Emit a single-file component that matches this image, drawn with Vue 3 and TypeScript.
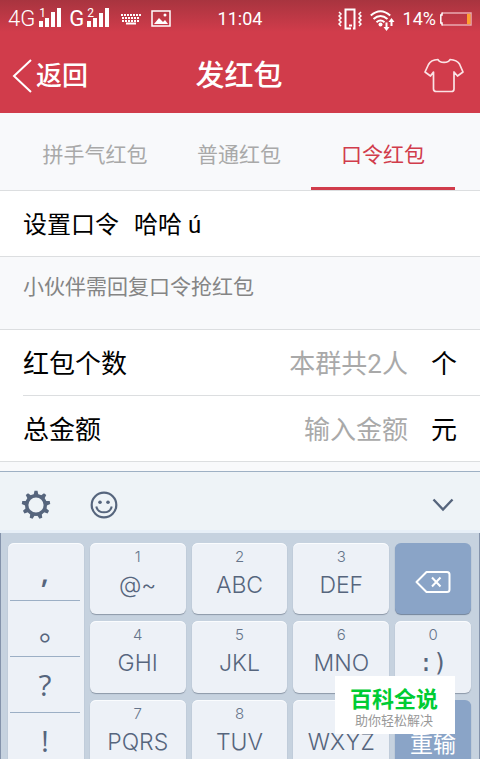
<script setup lang="ts">
import { ref } from 'vue'

interface Tab {
  id: string
  label: string
}

interface Key {
  digit: string
  label: string
}

const tabs: Tab[] = [
  { id: 'lucky', label: '拼手气红包' },
  { id: 'normal', label: '普通红包' },
  { id: 'password', label: '口令红包' },
]
const activeTab = ref('password')

const password = ref('哈哈 ú')
const count = ref('')
const amount = ref('')

const punctuation: string[] = [',', '。', '?', '!']

const rows: Key[][] = [
  [
    { digit: '1', label: '@~' },
    { digit: '2', label: 'ABC' },
    { digit: '3', label: 'DEF' },
  ],
  [
    { digit: '4', label: 'GHI' },
    { digit: '5', label: 'JKL' },
    { digit: '6', label: 'MNO' },
    { digit: '0', label: ':)' },
  ],
  [
    { digit: '7', label: 'PQRS' },
    { digit: '8', label: 'TUV' },
    { digit: '9', label: 'WXYZ' },
  ],
]

const gearTeeth: number[] = Array.from({ length: 9 }, (_, i) => i * 40)
</script>

<template>
  <div class="screen">
    <header class="header">
      <div class="status">
        <div class="status-left">
          <span class="net thin">4G</span>
          <span class="signal">
            <span class="sim">1</span>
            <svg width="22" height="20" viewBox="0 0 22 20" fill="#fff">
              <path d="M0 13h4v6H0zM6 10h4v9H6zM12 4h4v15h-4zM18 0h4v19h-4z" />
            </svg>
          </span>
          <span class="net second">G</span>
          <span class="signal tight">
            <span class="sim">2</span>
            <svg width="22" height="20" viewBox="0 0 22 20" fill="#fff">
              <path d="M0 13h4v6H0zM6 10h4v9H6zM12 5h4v14h-4zM18 0h4v19h-4z" />
            </svg>
          </span>
          <svg class="kbd" width="20" height="12" viewBox="0 0 20 12" fill="none" stroke="#fff" stroke-width="2">
            <path d="M0 2h20M1 5h18M1 8h18" stroke-dasharray="2 1" />
            <path d="M5 10.5h10" />
          </svg>
          <svg width="20" height="18" viewBox="0 0 20 18">
            <rect x="1" y="1" width="18" height="15" fill="none" stroke="#fff" stroke-width="1.5" />
            <path d="M3 14l5-6 4 4 2-2 3 4z" fill="#fff" />
            <circle cx="14" cy="5" r="1.5" fill="#fff" />
          </svg>
        </div>
        <span class="clock">11:04</span>
        <div class="status-right">
          <svg width="24" height="22" viewBox="0 0 24 22" fill="none" stroke="#fff">
            <path d="M13 20.500H7.500V1.500h9v19H15" stroke-width="2" />
            <path d="M11 17.500h3" stroke-width="2" />
            <path d="M1 4l2 2-2 2 2 2-2 2 2 2-2 2 2 2M23 4l-2 2 2 2-2 2 2 2-2 2 2 2-2 2" stroke-width="1.5" />
          </svg>
          <svg class="wifi" width="25" height="22" viewBox="0 0 25 22" fill="none" stroke="#fff">
            <path d="M.8 5.500q9.700-8.500 19.400 0M3.500 9q7-6 14 0M6.500 12.200q4-3.500 8 0" stroke-width="2" />
            <circle cx="10.500" cy="14.500" r="2" fill="#fff" stroke="none" />
            <path d="M16.500 12.500v6M21.500 16v-6" stroke-width="2" />
            <path d="M13.500 17h6l-3 4zM18.500 12h6l-3-4z" fill="#fff" stroke="none" />
          </svg>
          <span class="battery">
            <span class="percent">14%</span>
            <svg width="32" height="14" viewBox="0 0 32 14">
              <path d="M2 1h29v12H2" fill="none" stroke="#e9a9b0" stroke-width="1.500" />
              <path d="M2 .5v2.500H.8v8H2v2.500" fill="none" stroke="#fff" stroke-width="1.500" />
              <rect x="27" y="1.800" width="3.500" height="10.400" fill="#ffa02e" />
            </svg>
          </span>
        </div>
      </div>
      <nav class="nav">
        <a class="back" href="#">
          <svg width="20" height="34" viewBox="0 0 20 34" fill="none" stroke="#fff" stroke-width="2">
            <path d="M19 1L2 17l17 16" />
          </svg>
          返回
        </a>
        <h1 class="title">发红包</h1>
        <button class="shirt" type="button" aria-label="装扮">
          <svg width="40" height="35" viewBox="0 0 40 35" fill="none" stroke="#fbe3e5" stroke-width="1.700" stroke-linejoin="round">
            <path d="M14 1.500c1.500 3.800 10.500 3.800 12 0 4 .2 8 2 9.500 4.500L39 14l-5.500 4-3.500-4v17q0 2.500-2.500 2.500h-15Q9.500 33.500 9.500 31V14L6.500 18 1 14l3.500-7.500C6 3.500 10 1.700 14 1.500z" />
          </svg>
        </button>
      </nav>
    </header>

    <main class="content">
      <div class="tabs" role="tablist">
        <button
          v-for="tab in tabs"
          :key="tab.id"
          type="button"
          role="tab"
          class="tab"
          :class="{ active: tab.id === activeTab }"
          :aria-selected="tab.id === activeTab"
          @click="activeTab = tab.id"
        >
          {{ tab.label }}
        </button>
      </div>

      <div class="group">
        <div class="row password">
          <label for="password">设置口令</label>
          <input id="password" v-model="password" type="text" />
        </div>
      </div>

      <p class="hint">小伙伴需回复口令抢红包</p>

      <div class="group amounts">
        <div class="row">
          <label for="count">红包个数</label>
          <input id="count" v-model="count" type="text" placeholder="本群共2人" />
          <span class="unit">个</span>
        </div>
        <div class="row divided">
          <label for="amount">总金额</label>
          <input id="amount" v-model="amount" type="text" placeholder="输入金额" />
          <span class="unit">元</span>
        </div>
      </div>
    </main>

    <section class="ime">
      <div class="toolbar">
        <button type="button" aria-label="设置">
          <svg width="30" height="30" viewBox="-15 -15 30 30" fill="none" stroke="#56657d">
            <circle r="9.300" stroke-width="3.400" />
            <path
              v-for="angle in gearTeeth"
              :key="angle"
              d="M-2.400-10L-1.500-14.200h3L2.400-10z"
              :transform="`rotate(${angle})`"
              class="tooth"
            />
          </svg>
        </button>
        <button type="button" aria-label="表情">
          <svg width="28" height="28" viewBox="0 0 28 28" fill="none" stroke="#56657d" stroke-width="2.200">
            <circle cx="14" cy="14" r="12.300" />
            <path d="M6.300 15.500c1.500 7.800 13.900 7.800 15.400 0" stroke-width="2" />
            <circle cx="10" cy="11.300" r="1.800" fill="#56657d" stroke="none" />
            <circle cx="18" cy="11.300" r="1.800" fill="#56657d" stroke="none" />
          </svg>
        </button>
        <button class="collapse" type="button" aria-label="收起键盘">
          <svg width="22" height="14" viewBox="0 0 22 14" fill="none" stroke="#56657d" stroke-width="2.400">
            <path d="M1.500 1.500L11 11.500l9.500-10" />
          </svg>
        </button>
      </div>

      <div class="keys">
        <div class="punct">
          <button
            v-for="mark in punctuation"
            :key="mark"
            type="button"
            :class="{ wide: mark === '。', comma: mark === ',' }"
          >{{ mark }}</button>
        </div>
        <template v-for="(row, index) in rows" :key="index">
          <button v-for="key in row" :key="key.digit" class="key" type="button">
            <span class="digit">{{ key.digit }}</span>
            <span class="letters" :class="{ symbol: key.label === ':)' }">{{ key.label }}</span>
          </button>
          <button v-if="index === 0" class="key blue" type="button" aria-label="删除">
            <svg width="36" height="22" viewBox="0 0 36 22" fill="none" stroke="#fff" stroke-width="2">
              <path d="M11.500 1H32q2.500 0 2.500 2.500v15Q34.500 21 32 21H11.500L1.500 11z" stroke-linejoin="round" />
              <path d="M17 6.500l8.500 9M25.500 6.500l-8.500 9" />
            </svg>
          </button>
          <button v-if="index === 2" class="key blue reset" type="button">重输</button>
        </template>
      </div>
    </section>

    <aside class="watermark">
      <strong>百科全说</strong>
      <span>助你轻松解决</span>
    </aside>
  </div>
</template>

<style>
body {
  margin: 0;
}
</style>

<style scoped>
.screen {
  position: relative;
  display: flex;
  flex-direction: column;
  height: 100vh;
  overflow: hidden;
  background: #f8f9fb;
  color: #000;
  font-family: Roboto, "Noto Sans CJK SC", sans-serif;
}

.screen * {
  box-sizing: border-box;
}

button,
input {
  margin: 0;
  padding: 0;
  border: 0;
  background: none;
  color: inherit;
  font: inherit;
}

svg {
  display: block;
  flex: none;
}

.header {
  flex: none;
  background: linear-gradient(#a8343f, #d13c4b 32px);
  color: #fff;
}

.status {
  display: flex;
  align-items: center;
  height: 38px;
  padding: 0 8px;
}

.status-left,
.status-right {
  display: flex;
  flex: 1;
  align-items: center;
}

.status-right {
  justify-content: flex-end;
  gap: 8px;
}

.battery {
  display: flex;
  align-items: center;
  gap: 4px;
}

.net {
  font-size: 22px;
  line-height: 24px;
}

.thin {
  font-weight: 300;
}

.second {
  margin-left: 8px;
}

.signal {
  display: grid;
  margin: 0 0 2px 4px;
}

.tight {
  margin-left: 3px;
}

.signal > * {
  grid-area: 1 / 1;
}

.sim {
  font-size: 12px;
  line-height: 11px;
}

.kbd {
  margin: 0 10px 0 12px;
}

.clock,
.percent {
  font-size: 18px;
  line-height: 24px;
}

.wifi {
  margin-top: 3px;
}

.nav {
  display: grid;
  grid-template-columns: 1fr auto 1fr;
  align-items: center;
  height: 75px;
  padding: 0 14px 0 12px;
}

.back {
  display: flex;
  align-items: center;
  gap: 4px;
  color: #fff;
  font-size: 26px;
  font-weight: 500;
  line-height: 34px;
  text-decoration: none;
}

.title {
  margin: 0;
  font-size: 29px;
  font-weight: 500;
  line-height: 36px;
}

.shirt {
  justify-self: end;
  padding-right: 2px;
}

.content {
  flex: none;
}

.tabs {
  display: grid;
  grid-template-columns: repeat(3, 1fr);
  height: 78px;
  padding: 0 25px 0 23px;
  border-bottom: 1px solid #dcdee0;
}

.tab {
  padding-top: 6px;
  border-bottom: 3px solid transparent;
  color: #a9a9a9;
  font-size: 21px;
}

.tab.active {
  border-bottom-color: #d13c4b;
  color: #d13c4b;
}

.group {
  background: #fff;
  border-bottom: 1px solid #dcdee0;
}

.row {
  display: flex;
  align-items: baseline;
  height: 65px;
  padding: 3px 23px 0;
  font-size: 26px;
  line-height: 62px;
}

.row input {
  flex: 1;
  min-width: 0;
  height: 40px;
  outline: none;
}

.password {
  gap: 15px;
  font-size: 24px;
}

.hint {
  height: 72px;
  margin: 0;
  padding: 15px 23px 0;
  color: #858585;
  font-size: 21px;
  line-height: 30px;
}

.amounts {
  border-top: 1px solid #dcdee0;
}

.amounts input {
  text-align: right;
}

.amounts input::placeholder {
  color: #a9a9a9;
  opacity: 1;
}

.divided {
  height: 66px;
  margin-left: 23px;
  padding-left: 0;
  border-top: 1px solid #dcdee0;
}

.unit {
  margin-left: 23px;
}

.ime {
  display: flex;
  flex: 1;
  flex-direction: column;
  min-height: 0;
  margin-top: 9px;
  border-top: 1px solid #9eb0c4;
}

.toolbar {
  display: flex;
  flex: none;
  align-items: center;
  gap: 39px;
  height: 61px;
  padding: 7px 26px 0 21px;
  background: #eef3f7;
  border-bottom: 3px solid #e7eff7;
}

.tooth {
  fill: #56657d;
  stroke: none;
}

.collapse {
  margin-left: auto;
}

.keys {
  display: grid;
  flex: 1;
  grid-template-columns: 76fr 96fr 96fr 96fr 76fr;
  grid-template-rows: 71px 72px 72px 72px;
  gap: 7px 6px;
  min-height: 0;
  padding: 10px 8px 0 7px;
  background: #c6d2df;
  border: solid #8493ab;
  border-width: 0 1px;
  color: #56657d;
}

.punct,
.key {
  border-radius: 6px;
  background: #edf1f7;
  box-shadow: 0 1px 1px #8c98a8, inset 0 1px 0 #fafcfe;
}

.punct {
  display: flex;
  grid-row: 1 / 5;
  flex-direction: column;
  padding: 0 4px 0 2px;
}

.punct button {
  flex: none;
  height: 56px;
  border-bottom: 1px solid #9cafc5;
  font-family: "Open Sans", "Noto Sans CJK SC", sans-serif;
  font-size: 30px;
  line-height: 54px;
}

.punct button:first-child {
  height: 58px;
}

.punct .comma {
  font-weight: 600;
}

.punct .wide {
  padding-left: 18px;
}

.key {
  display: flex;
  flex-direction: column;
  align-items: center;
  min-width: 0;
  padding-top: 4px;
  font-family: Inter, "Noto Sans CJK SC", sans-serif;
  font-weight: 300;
}

.digit {
  color: #66758b;
  font-size: 15px;
  line-height: 20px;
}

.letters {
  font-size: 23px;
  line-height: 36px;
}

.symbol {
  font-family: "DejaVu Sans Mono", monospace;
  font-size: 24px;
}

.blue {
  justify-content: center;
  padding-top: 7px;
  background: #8aa4c7;
  box-shadow: 0 1px 1px #72839b;
  color: #fff;
}

.reset {
  padding-top: 12px;
  font-size: 23px;
  font-weight: 400;
}

.watermark {
  position: absolute;
  right: 25px;
  bottom: 25px;
  display: flex;
  flex-direction: column;
  align-items: center;
  width: 120px;
  height: 58px;
  padding: 11px 2px 0 0;
  background: #fff;
}

.watermark strong {
  color: #00cc33;
  font-size: 22px;
  font-weight: 700;
  line-height: 26px;
}

.watermark span {
  color: #999;
  font-size: 13px;
  line-height: 16px;
}
</style>
